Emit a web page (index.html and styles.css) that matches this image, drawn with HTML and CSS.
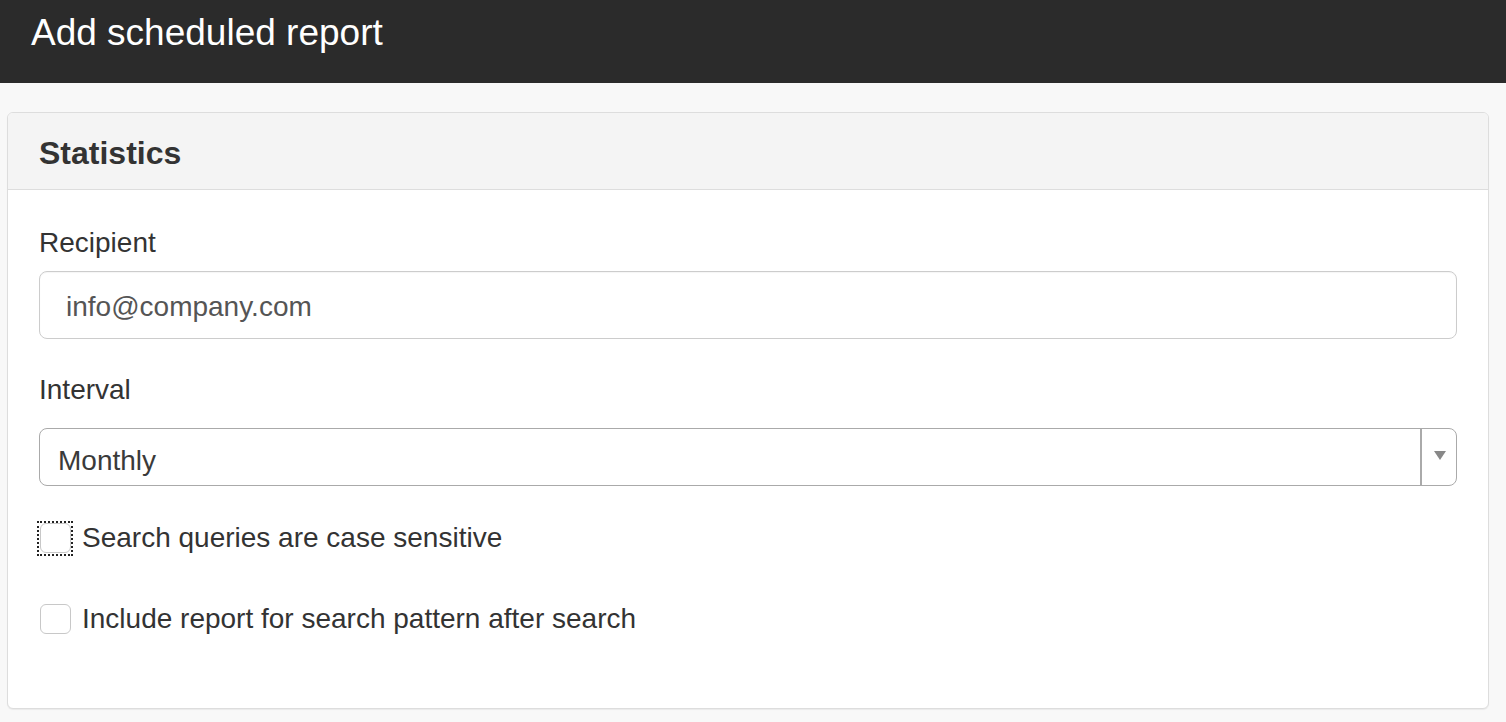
FILE: index.html
```html
<!DOCTYPE html>
<html lang="en">
<head>
<meta charset="utf-8">
<title>Add scheduled report</title>
<link rel="stylesheet" href="styles.css">
</head>
<body>
<header class="topbar">
  <h1 class="topbar-title">Add scheduled report</h1>
</header>
<main class="panel">
  <div class="panel-heading">
    <h3 class="panel-title">Statistics</h3>
  </div>
  <form class="panel-body">
    <div class="form-group group-recipient">
      <label class="field-label" for="recipient">Recipient</label>
      <input class="text-input" id="recipient" type="text" value="info@company.com">
    </div>
    <div class="form-group group-interval">
      <label class="field-label">Interval</label>
      <div class="select-box">
        <span class="select-value">Monthly</span>
        <span class="select-arrow"><span class="arrow-tri"></span></span>
      </div>
    </div>
    <label class="check-row row-first">
      <span class="focus-ring"><input class="check-box" type="checkbox"></span>
      <span class="check-text">Search queries are case sensitive</span>
    </label>
    <label class="check-row row-second">
      <span class="focus-ring plain"><input class="check-box" type="checkbox"></span>
      <span class="check-text">Include report for search pattern after search</span>
    </label>
  </form>
</main>
</body>
</html>
```
FILE: styles.css
```css
* {
  box-sizing: border-box;
}

html, body {
  margin: 0;
  padding: 0;
}

body {
  background: #f8f8f8;
  font-family: "Liberation Sans", Arial, Helvetica, sans-serif;
  color: #333;
  width: 1506px;
  height: 722px;
  overflow: hidden;
}

.topbar {
  height: 83px;
  background: #2b2b2b;
  padding: 13px 31px 0;
}

.topbar-title {
  margin: 0;
  font-size: 37px;
  line-height: 40px;
  font-weight: normal;
  color: #ffffff;
}

.panel {
  display: block;
  margin: 29px 17px 0 7px;
  background: #ffffff;
  border: 1px solid #dddddd;
  border-radius: 6px;
  box-shadow: 0 1px 1px rgba(0, 0, 0, 0.06);
}

.panel-heading {
  background: #f4f4f4;
  border-bottom: 1px solid #dddddd;
  border-radius: 5px 5px 0 0;
  padding: 22px 31px 18px;
  height: 77px;
}

.panel-title {
  margin: 0;
  font-size: 32px;
  line-height: 36px;
  font-weight: bold;
  color: #333;
}

.panel-body {
  display: flex;
  flex-direction: column;
  padding: 33px 31px 73px 31px;
  margin: 0;
}

.form-group {
  display: flex;
  flex-direction: column;
}

.field-label {
  font-size: 28px;
  line-height: 40px;
  color: #333;
}

.group-recipient .field-label {
  margin-bottom: 8px;
}

.group-interval {
  margin-top: 31px;
}

.group-interval .field-label {
  margin-bottom: 18px;
}

.text-input {
  display: block;
  width: 100%;
  height: 68px;
  margin: 0;
  padding: 4px 24px 0 26px;
  border: 1px solid #cccccc;
  border-radius: 8px;
  background: #ffffff;
  font-family: "Liberation Sans", Arial, Helvetica, sans-serif;
  font-size: 28px;
  color: #555555;
  outline: none;
  box-shadow: inset 0 1px 1px rgba(0, 0, 0, 0.04);
}

.select-box {
  display: flex;
  height: 58px;
  border: 1px solid #aaaaaa;
  border-radius: 8px;
  background: #ffffff;
}

.select-value {
  flex: 1;
  padding: 8px 0 0 18px;
  font-size: 28px;
  line-height: 48px;
  color: #3a3a3a;
}

.select-arrow {
  width: 36px;
  border-left: 2px solid #aaaaaa;
  display: flex;
  align-items: center;
  justify-content: center;
}

.arrow-tri {
  width: 0;
  height: 0;
  border-left: 6px solid transparent;
  border-right: 6px solid transparent;
  border-top: 9px solid #888888;
  margin-left: 1px;
  margin-top: -4px;
}

.check-row {
  display: flex;
  align-items: center;
  height: 32px;
  cursor: pointer;
}

.row-first {
  margin-top: 36px;
}

.row-second {
  margin-top: 49px;
}

.focus-ring {
  display: flex;
  align-items: center;
  justify-content: center;
  width: 36px;
  height: 35px;
  margin: 0 9px 0 -2px;
  border: 2px dotted #222222;
  flex: none;
}

.focus-ring.plain {
  border-color: transparent;
}

.check-box {
  -webkit-appearance: none;
  appearance: none;
  width: 31px;
  height: 30px;
  margin: 0;
  border: 1px solid #c8c8c8;
  border-radius: 6px;
  background: #ffffff;
  flex: none;
}

.check-text {
  font-size: 28px;
  line-height: 32px;
  color: #333;
}
```
